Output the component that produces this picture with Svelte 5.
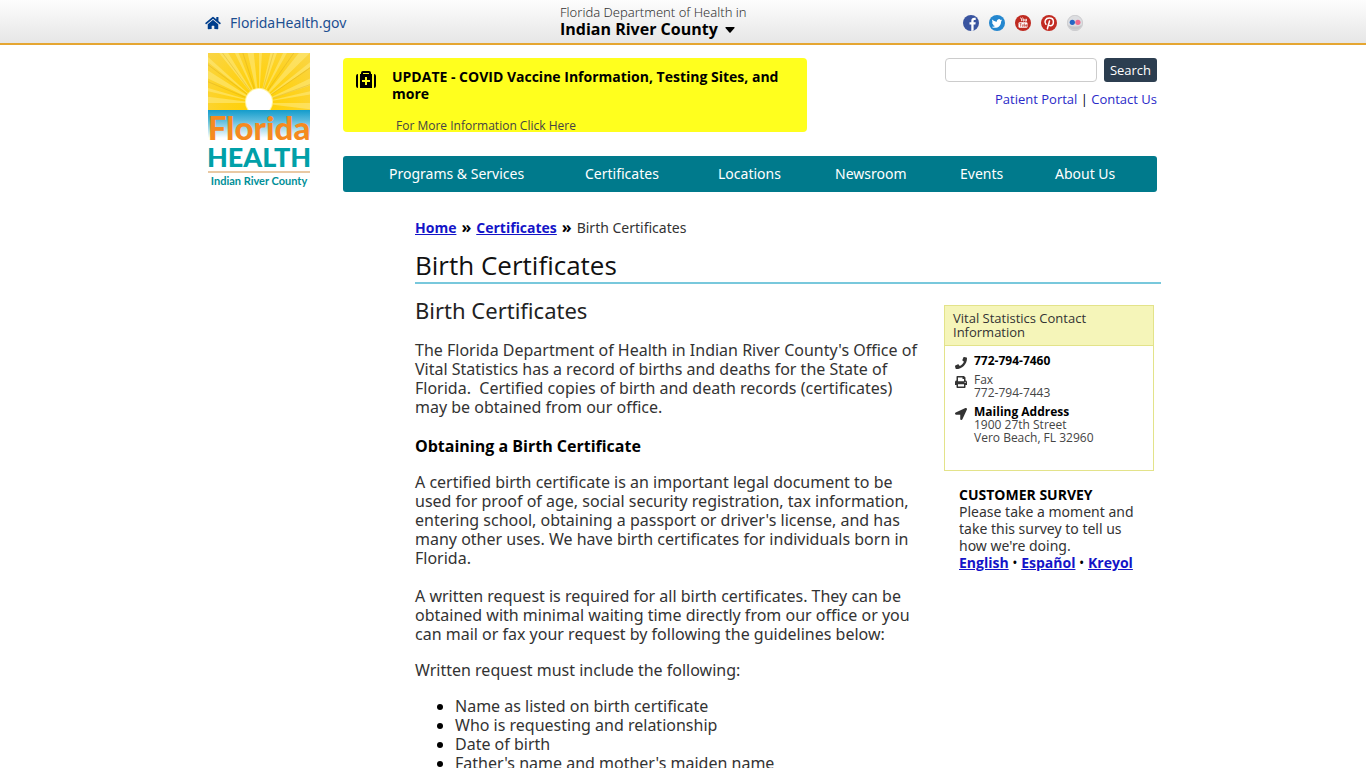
<script>
  const navItems = [
    'Programs & Services',
    'Certificates',
    'Locations',
    'Newsroom',
    'Events',
    'About Us',
  ];

  const requirements = [
    'Name as listed on birth certificate',
    'Who is requesting and relationship',
    'Date of birth',
    "Father's name and mother's maiden name",
  ];

  const surveys = ['English', 'Español', 'Kreyol'];

  // sun rays fan out from the sun centre (51, 50)
  const rays = Array.from({ length: 15 }, (_, i) => {
    const a = Math.PI + (i * Math.PI) / 14;
    const b = a + (i % 2 ? 0.06 : 0.12);
    return `M51 50L${51 + 90 * Math.cos(a)} ${50 + 90 * Math.sin(a)}L${51 + 90 * Math.cos(b)} ${50 + 90 * Math.sin(b)}Z`;
  });

  let query = $state('');
</script>

<div class="topbar">
  <div class="wrap topbar-inner">
    <a class="home" href="/">
      <svg viewBox="0 0 576 512" width="16" height="14" aria-hidden="true">
        <path d="M280.37 148.26L96 300.11V464a16 16 0 0 0 16 16l112.06-.29a16 16 0 0 0 15.92-16V368a16 16 0 0 1 16-16h64a16 16 0 0 1 16 16v95.64a16 16 0 0 0 16 16.05L464 480a16 16 0 0 0 16-16V300L295.67 148.26a12.19 12.19 0 0 0-15.3 0zM571.6 251.47L488 182.56V44.05a12 12 0 0 0-12-12h-56a12 12 0 0 0-12 12v72.61L318.47 43a48 48 0 0 0-61 0L4.34 251.47a12 12 0 0 0-1.6 16.9l25.5 31A12 12 0 0 0 45.15 301l235.22-193.74a12.19 12.19 0 0 1 15.3 0L530.9 301a12 12 0 0 0 16.9-1.6l25.5-31a12 12 0 0 0-1.7-16.93z" />
      </svg>
      <span>FloridaHealth.gov</span>
    </a>

    <div class="county">
      <span class="dept">Florida Department of Health in</span>
      <button class="county-btn" type="button">
        Indian River County
        <svg viewBox="0 0 10 6" width="10" height="6" aria-hidden="true"><path d="M1 0h8q1 0 .5 1L5.600 5.500q-.6.600-1.200 0L.5 1Q0 0 1 0z" /></svg>
      </button>
    </div>

    <div class="social">
      <a href="#facebook" aria-label="Facebook">
        <svg viewBox="0 0 16 16" width="16" height="16">
          <circle cx="8" cy="8" r="8" fill="#3a55a0" />
          <path d="M8.300 15.900V9.600H6.500V7.200h1.800V5.800c0-2 1.100-3 3-3h1.400V5h-1.100c-.8 0-1 .4-1 1v1.200h2.100l-.3 2.400h-1.800v6z" fill="#fff" />
        </svg>
      </a>
      <a href="#twitter" aria-label="Twitter">
        <svg viewBox="0 0 16 16" width="16" height="16">
          <circle cx="8" cy="8" r="8" fill="#2487cf" />
          <path d="M13.200 5.200l-1.100.3.800-1.100-1.300.5a2.200 2.200 0 0 0-3.800 1.900C6 6.700 4.500 5.800 3.400 4.500c-.6 1-.3 2.200.6 2.900l-1-.2c0 1.100.8 1.900 1.800 2.200l-.9.100c.3.800 1.100 1.400 2 1.500-.9.700-2 .9-3.100.9 4.200 2.400 9.300-.2 9.300-5.500z" fill="#fff" />
        </svg>
      </a>
      <a href="#youtube" aria-label="YouTube">
        <svg viewBox="0 0 16 16" width="16" height="16">
          <circle cx="8" cy="8" r="8" fill="#bf2a20" />
          <path d="M5.500 2.500l1 2v1.700M7.500 2.500l-1 2M8 4h1v2H8zM10.200 3.800v2.300h1.300V3.800" fill="none" stroke="#fff" stroke-width=".8" />
          <rect x="3.500" y="7.200" width="9" height="5.600" rx="1.200" fill="#fff" />
          <path d="M4.500 8.600h2M5.500 8.600v3M7.200 9.300v2h1v-2M9.300 8.300v3h.8V9.800h-.8M11.900 11.300h-1V9.800h1v.8h-1" fill="none" stroke="#bf2a20" stroke-width=".6" />
        </svg>
      </a>
      <a href="#pinterest" aria-label="Pinterest">
        <svg viewBox="0 0 16 16" width="16" height="16">
          <circle cx="8" cy="8" r="8" fill="#c22b22" />
          <path d="M4.900 9.300C2.700 6.500 4.700 3 8.200 3c2.600 0 4.200 1.600 4.200 3.700 0 2.300-1.400 4-3.200 4-1 0-1.600-.6-1.700-1.200L6.400 13.700M8.500 6l-1.300 5" fill="none" stroke="#fff" stroke-width="1.500" stroke-linecap="round" />
        </svg>
      </a>
      <a href="#flickr" aria-label="Flickr">
        <svg viewBox="0 0 16 16" width="16" height="16">
          <circle cx="8" cy="8" r="7.700" fill="#dddee1" stroke="#bcbcc0" stroke-width=".6" />
          <path d="M1 10a7.500 7.500 0 0 0 14 0q-7 3-14 0z" fill="#c6c7ca" />
          <circle cx="5.300" cy="7.300" r="2.600" fill="#2466c4" />
          <circle cx="10.900" cy="7.300" r="2.600" fill="#ee6a8c" />
        </svg>
      </a>
    </div>
  </div>
</div>

<header class="wrap masthead">
  <a class="logo" href="/" aria-label="Florida Health Indian River County">
    <svg viewBox="0 0 102 136" width="102" height="136">
      <defs>
        <radialGradient id="sky" gradientUnits="userSpaceOnUse" cx="51" cy="50" r="72">
          <stop offset="0" stop-color="#ffd000" />
          <stop offset=".5" stop-color="#fed21c" />
          <stop offset="1" stop-color="#f9d548" />
        </radialGradient>
        <linearGradient id="sea" x1="0" y1="0" x2="0" y2="1">
          <stop offset="0" stop-color="#149ccb" />
          <stop offset=".35" stop-color="#55b9dc" />
          <stop offset="1" stop-color="#fff" />
        </linearGradient>
        <clipPath id="skyclip"><rect width="102" height="57" /></clipPath>
      </defs>
      <g clip-path="url(#skyclip)">
        <rect width="102" height="57" fill="url(#sky)" />
        {#each rays as d}
          <path {d} fill="#fde97c" opacity=".6" />
        {/each}
        <path d="M51 50L-9 25M51 50L-9 5M51 50L8-9M51 50L32-9M51 50L68-9M51 50L92-9M51 50L112 8M51 50L112 28" stroke="#c99a1c" stroke-width=".5" opacity=".6" />
        <circle cx="51" cy="49" r="14" fill="#fff3a0" />
        <circle cx="51" cy="49" r="13" fill="#fff" />
      </g>
      <rect y="57" width="102" height="28" fill="url(#sea)" />
      <text class="logo-florida" x="51" y="87" text-anchor="middle">Florida</text>
      <text class="logo-health" x="51" y="114" text-anchor="middle">HEALTH</text>
      <rect y="118" width="102" height="2" fill="#e9c9a4" />
      <text class="logo-county" x="51" y="132" text-anchor="middle">Indian River County</text>
    </svg>
  </a>

  <div class="masthead-main">
    <div class="masthead-row">
      <section class="alert">
        <svg viewBox="0 0 20 17" width="20" height="17" aria-hidden="true">
          <path d="M0 5q0-2 2-2v14q-2 0-2-2zM20 5q0-2-2-2v14q2 0 2-2z" />
          <path fill-rule="evenodd" d="M4 3h1V2q0-2 2-2h6q2 0 2 2v1h1v14H4zM7 3h6V2H7zM9 6v3H6v2h3v3h2v-3h3V9h-3V6z" />
        </svg>
        <div>
          <h2>UPDATE - COVID Vaccine Information, Testing Sites, and more</h2>
          <p>For More Information Click Here</p>
        </div>
      </section>

      <div class="tools">
        <form class="search" role="search" onsubmit={(e) => e.preventDefault()}>
          <input type="text" aria-label="Search" bind:value={query} />
          <button type="submit">Search</button>
        </form>
        <div class="quick">
          <a href="#portal">Patient Portal</a> | <a href="#contact">Contact Us</a>
        </div>
      </div>
    </div>

    <nav>
      {#each navItems as item}
        <a href="#nav">{item}</a>
      {/each}
    </nav>
  </div>
</header>

<main class="wrap">
  <div class="page">
    <div class="crumbs">
      <a href="#home">Home</a><b>»</b><a href="#certificates">Certificates</a><b>»</b><span>Birth Certificates</span>
    </div>
    <h1>Birth Certificates</h1>

    <div class="columns">
      <article>
        <h2>Birth Certificates</h2>
        <p>
          The Florida Department of Health in Indian River County's Office of Vital
          Statistics has a record of births and deaths for the State of Florida.&nbsp;
          Certified copies of birth and death records (certificates) may be obtained
          from our office.
        </p>
        <h3>Obtaining a Birth Certificate</h3>
        <p>
          A certified birth certificate is an important legal document to be used for
          proof of age, social security registration, tax information, entering school,
          obtaining a passport or driver's license, and has many other uses. We have
          birth certificates for individuals born in Florida.<br /><br />
          A written request is required for all birth certificates. They can be obtained
          with minimal waiting time directly from our office or you can mail or fax your
          request by following the guidelines below:
        </p>
        <p>Written request must include the following:</p>
        <ul>
          {#each requirements as item}
            <li>{item}</li>
          {/each}
        </ul>
      </article>

      <aside>
        <section class="contact">
          <h4>Vital Statistics Contact Information</h4>
          <ul>
            <li>
              <svg viewBox="0 0 512 512" width="12" height="12" aria-hidden="true">
                <path d="M493.400 24.600l-104-24c-11.300-2.600-22.900 3.300-27.500 13.900l-48 112c-4.200 9.800-1.400 21.300 6.900 28l60.600 49.600c-36 76.700-98.900 140.500-177.200 177.200l-49.600-60.600c-6.800-8.300-18.200-11.100-28-6.900l-112 48C3.900 366.500-2 378.100.6 389.400l24 104C27.100 504.200 36.700 512 48 512c256.100 0 464-207.500 464-464 0-11.200-7.700-20.900-18.600-23.400z" />
              </svg>
              <div><strong>772-794-7460</strong></div>
            </li>
            <li>
              <svg viewBox="0 0 512 512" width="12" height="12" aria-hidden="true">
                <path d="M448 192V77.250c0-8.490-3.370-16.620-9.370-22.630L393.370 9.370c-6-6-14.140-9.370-22.630-9.370H96C78.330 0 64 14.330 64 32v160c-35.350 0-64 28.650-64 64v112c0 8.840 7.160 16 16 16h48v96c0 17.670 14.330 32 32 32h320c17.670 0 32-14.330 32-32v-96h48c8.840 0 16-7.160 16-16V256c0-35.350-28.650-64-64-64zm-64 256H128v-96h256v96zm0-224H128V64h192v48c0 8.840 7.160 16 16 16h48v96zm48 72c-13.250 0-24-10.750-24-24 0-13.260 10.750-24 24-24s24 10.740 24 24c0 13.250-10.750 24-24 24z" />
              </svg>
              <div>Fax<br />772-794-7443</div>
            </li>
            <li>
              <svg viewBox="0 0 512 512" width="12" height="12" aria-hidden="true">
                <path d="M444.520 3.520L28.740 195.420c-47.970 22.390-31.980 92.750 19.190 92.750h175.910v175.910c0 51.170 70.360 67.170 92.750 19.190l191.900-415.780c15.990-38.390-25.590-79.970-63.970-63.970z" />
              </svg>
              <div><strong>Mailing Address</strong><br />1900 27th Street<br />Vero Beach, FL 32960</div>
            </li>
          </ul>
        </section>

        <section class="survey">
          <strong>CUSTOMER SURVEY</strong>
          <p>Please take a moment and take this survey to tell us how we're doing.</p>
          <div>
            {#each surveys as lang, i}{#if i > 0}<span>&nbsp;•&nbsp;</span>{/if}<a href="#survey">{lang}</a>{/each}
          </div>
        </section>
      </aside>
    </div>
  </div>
</main>

<style>
  :global(body) {
    background: #fff;
    color: #000;
    font-family: 'Open Sans', 'Noto Sans', sans-serif;
    font-size: 16px;
    line-height: 19px;
  }

  a { text-decoration: none; }
  h1, h2, h3, h4, p, ul { margin: 0; }
  button, input { font: inherit; box-sizing: border-box; }

  .wrap {
    max-width: 960px;
    margin: 0 auto;
  }

  /* Top bar */
  .topbar {
    background: linear-gradient(#fdfdfd, #e6e6e6);
    border-bottom: 2px solid #e5a632;
  }
  .topbar-inner {
    display: grid;
    grid-template-columns: 357fr 403fr 200fr;
    height: 43px;
  }
  .home {
    display: flex;
    align-items: center;
    gap: 9px;
    padding: 2px 0 0 2px;
    color: #1d4f91;
    font-family: 'Noto Sans', sans-serif;
    font-size: 14px;
  }
  .home svg { fill: #003e8c; }
  .county {
    display: flex;
    flex-direction: column;
    align-items: flex-start;
    padding-top: 5px;
  }
  .dept {
    color: #333;
    font-family: 'Noto Sans', sans-serif;
    font-size: 13px;
    font-weight: 300;
    line-height: 15px;
  }
  .county-btn {
    display: flex;
    align-items: center;
    gap: 7px;
    padding: 0;
    border: 0;
    background: none;
    color: #000;
    font-weight: 700;
  }
  .social {
    display: flex;
    align-items: center;
    gap: 10px;
    padding-top: 2px;
  }
  .social a, .social svg { display: block; }

  /* Masthead */
  .masthead {
    display: flex;
    padding-top: 8px;
  }
  .logo {
    flex: none;
    box-sizing: border-box;
    width: 140px;
    padding-left: 5px;
  }
  .logo svg { display: block; overflow: visible; }
  .logo-florida, .logo-health, .logo-county { font-family: Lato, sans-serif; }
  .logo-florida { fill: #f58a1f; font-size: 33px; font-weight: 900; }
  .logo-health { fill: #00a0a8; font-size: 27px; font-weight: 900; }
  .logo-county { fill: #008f98; font-size: 11px; font-weight: 700; }
  .masthead-main {
    flex: 1;
    padding: 5px 6px 0 0;
  }
  .masthead-row {
    display: flex;
    justify-content: space-between;
    margin-bottom: 24px;
  }
  .alert {
    display: flex;
    align-items: flex-start;
    gap: 16px;
    width: 464px;
    height: 74px;
    padding: 10px 24px 0 13px;
    box-sizing: border-box;
    overflow: hidden;
    border-radius: 4px;
    background: #ffff1e;
  }
  .alert svg { flex: none; margin-top: 3px; }
  .alert h2 {
    font-size: 14px;
    font-weight: 700;
    line-height: 17px;
  }
  .alert p {
    margin: 15px 0 0 4px;
    color: #444;
    font-size: 12px;
    line-height: 17px;
  }
  .search { display: flex; gap: 7px; }
  .search input {
    width: 152px;
    height: 24px;
    border: 1px solid #ccc;
    border-radius: 4px;
  }
  .search button {
    width: 53px;
    height: 24px;
    padding: 0;
    border: 0;
    border-radius: 3px;
    background: #2c3e50;
    color: #fff;
    font-size: 13px;
  }
  .quick {
    margin-top: 8px;
    text-align: right;
    font-size: 13px;
  }
  .quick a { color: #2a2ac8; }
  nav {
    display: grid;
    grid-template-columns: 196fr 133fr 117fr 125fr 95fr 102fr;
    padding-left: 46px;
    border-radius: 3px;
    background: #007a8c;
    font-family: 'Noto Sans', sans-serif;
    line-height: 36px;
  }
  nav a {
    color: #fff;
    font-size: 14px;
    white-space: nowrap;
  }

  /* Page */
  .page { padding: 26px 2px 0 212px; }
  .crumbs {
    display: flex;
    gap: 5px;
    font-size: 14px;
  }
  .crumbs b { font-size: 16px; }
  .crumbs span {
    color: #333;
    font-family: 'Noto Sans', sans-serif;
  }
  .crumbs a { font-weight: 700; }
  .crumbs a, .survey a {
    color: #1414c8;
    text-decoration: underline;
  }
  h1 {
    margin-top: 13px;
    padding-bottom: 1px;
    border-bottom: 2px solid #78c8dc;
    color: #111;
    font-size: 26px;
    font-weight: 400;
    line-height: 31px;
  }
  .columns {
    display: flex;
    align-items: flex-start;
    justify-content: space-between;
    padding-right: 7px;
  }
  article {
    width: 504px;
    padding-top: 12px;
    font-family: 'Noto Sans', sans-serif;
  }
  article h2 {
    color: #222;
    font-size: 22px;
    font-weight: 400;
    line-height: 28px;
  }
  article h3 {
    margin-top: 20px;
    font-family: 'Open Sans', sans-serif;
    font-size: 16px;
    font-weight: 700;
  }
  article p, article ul { margin-top: 17px; color: #333; }
  article ul { padding-left: 40px; }
  article li::marker { color: #000; }

  aside { width: 210px; padding-top: 21px; }
  .contact {
    height: 164px;
    border: 1px solid #e3e38a;
    font-size: 12px;
    line-height: 13px;
  }
  .contact h4 {
    padding: 5px 8px 6px;
    border-bottom: 1px solid #e3e38a;
    background: #f5f5b9;
    font-size: 13px;
    font-weight: 400;
    line-height: 14px;
    color: #333;
  }
  .contact ul { padding: 8px 0 0 10px; list-style: none; }
  .contact li {
    display: flex;
    align-items: flex-start;
    gap: 7px;
    margin-bottom: 6px;
    color: #444;
  }
  .contact svg { flex: none; margin: 3px 0 -2px; fill: #333; }
  .survey {
    padding: 15px 15px 0;
    font-size: 14px;
    line-height: 17px;
  }
  .survey p {
    color: #333;
    font-family: 'Noto Sans', sans-serif;
  }
  .contact strong, .survey strong { color: #000; font-weight: 700; }
  .survey a { font-weight: 700; }
</style>
